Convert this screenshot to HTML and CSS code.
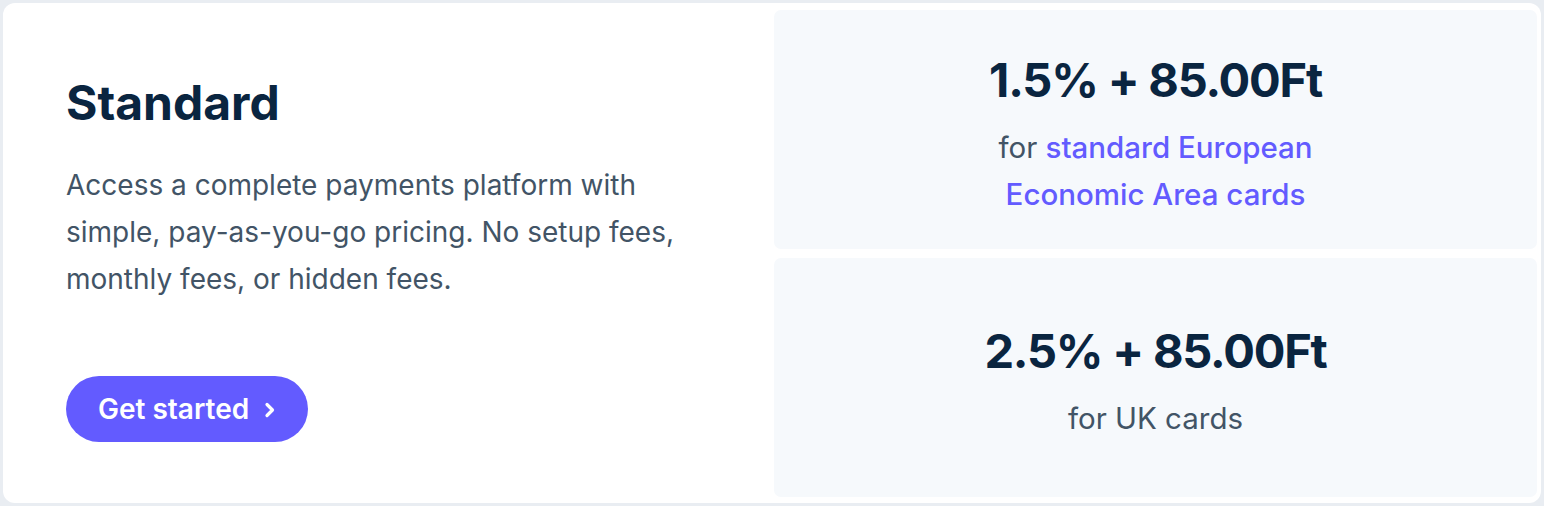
FILE: index.html
```html
<!DOCTYPE html>
<html>
<head>
<meta charset="utf-8">
<link rel="stylesheet" href="styles.css">
</head>
<body>
<div class="card">
  <div class="intro">
    <h2 class="title">Standard</h2>
    <p class="desc">Access a complete payments platform with simple, pay-as-you-go pricing. No setup fees, monthly fees, or hidden fees.</p>
    <a class="btn" href="#">Get started<svg class="chev" width="14" height="20" viewBox="0 0 14 20"><path d="M4 4.5l5.5 5.5-5.5 5.5" fill="none" stroke="#fff" stroke-width="3.2" stroke-linecap="round" stroke-linejoin="round"/></svg></a>
  </div>
  <div class="prices">
    <div class="panel">
      <div class="price">1.5% + 85.00Ft</div>
      <div class="note">for <a class="link" href="#">standard European<br>Economic Area cards</a></div>
    </div>
    <div class="panel">
      <div class="price">2.5% + 85.00Ft</div>
      <div class="note">for UK cards</div>
    </div>
  </div>
</div>
</body>
</html>
```
FILE: styles.css
```css
* { box-sizing: border-box; }
html, body { margin: 0; padding: 0; }
body {
  background: #e9edf2;
  font-family: Inter, "Noto Sans", sans-serif;
  width: 1544px;
  height: 506px;
  overflow: hidden;
  padding: 3px 3px 3px 3px;
}
.card {
  background: #fff;
  border-radius: 12px;
  height: 500px;
  display: flex;
  padding: 7px 4px 6px 0;
  gap: 8px;
}
.intro {
  width: 763px;
  flex: none;
  padding: 65px 0 0 63px;
  display: flex;
  flex-direction: column;
  align-items: flex-start;
}
.title {
  margin: 0;
  font-size: 48px;
  line-height: 56px;
  font-weight: 700;
  color: #0a2540;
  letter-spacing: 0;
}
.desc {
  margin: 31px 0 0;
  font-size: 28px;
  line-height: 47px;
  color: #425466;
  width: 645px;
  font-weight: 400;
}
.btn {
  margin-top: 73px;
  height: 66px;
  padding: 0 31px 0 32px;
  border-radius: 33px;
  background: #635bff;
  color: #fff;
  text-decoration: none;
  font-size: 28px;
  font-weight: 600;
  display: flex;
  align-items: center;
  gap: 14px;
}
.chev { margin-top: 2px; }
.prices {
  flex: 1;
  display: flex;
  flex-direction: column;
  gap: 9px;
}
.panel {
  flex: 1;
  background: #f6f9fc;
  border-radius: 7px;
  display: flex;
  flex-direction: column;
  align-items: center;
  justify-content: center;
  text-align: center;
  padding-top: 10px;
}
.price {
  font-size: 47px;
  line-height: 56px;
  font-weight: 700;
  color: #0a2540;
  letter-spacing: -1.2px;
}
.note {
  margin-top: 16px;
  font-size: 29.5px;
  line-height: 47px;
  color: #425466;
}
.link {
  color: #635bff;
  font-weight: 500;
  text-decoration: none;
}
```
